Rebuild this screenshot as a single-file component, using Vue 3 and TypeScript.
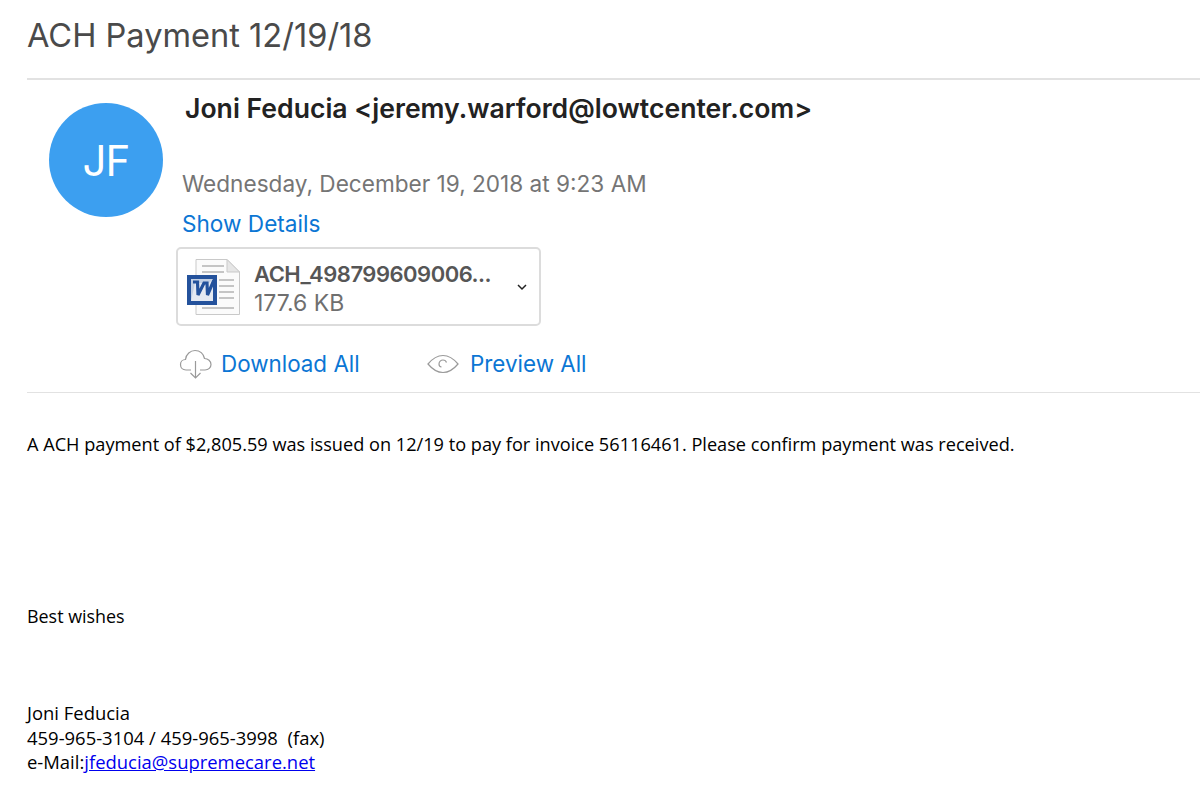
<script setup lang="ts">
const bodyLines: string[] = ['Joni Feducia', '459-965-3104 / 459-965-3998  (fax)']
</script>

<template>
  <div class="page">
    <h1 class="subject">ACH Payment 12/19/18</h1>
    <div class="rule"></div>
    <header class="head">
      <div class="avatar">JF</div>
      <div class="meta">
        <div class="from">Joni Feducia &lt;jeremy.warford@lowtcenter.com&gt;</div>
        <div class="date">Wednesday, December 19, 2018 at 9:23 AM</div>
        <a class="details">Show Details</a>
        <div class="attachment">
          <svg class="doc" width="56" height="58" viewBox="0 0 56 58">
            <path d="M10 1.5H41L53.5 14V56.5H10Z" fill="#fbfbfb" stroke="#c9c9c9" />
            <path d="M41 1.5V14H53.5Z" fill="#e6e6e6" stroke="#c9c9c9" />
            <path d="M16 8H38M16 14H38M33 22H48M33 28H48M33 34H48M33 40H48M16 50H48" stroke="#b4b4b4" stroke-width="1.5" />
            <rect x="1" y="17" width="30" height="30" fill="#24529c" />
            <rect x="5" y="21" width="22" height="22" fill="#e4e9f2" />
            <path d="M5 21H27L23 25H9L5 43Z" fill="#c3d0e4" />
            <path d="M7 24H11.5L12 37L18 25H21L21.5 37L28 22" fill="none" stroke="#24529c" stroke-width="3.2" />
          </svg>
          <div class="file">
            <div class="filename">ACH_498799609006...</div>
            <div class="filesize">177.6 KB</div>
          </div>
          <svg class="chev" width="10" height="7" viewBox="0 0 10 7">
            <path d="M1 1L5 5L9 1" fill="none" stroke="#222" stroke-width="1.5" />
          </svg>
        </div>
        <div class="actions">
          <a class="action">
            <svg width="34" height="32" viewBox="0 0 34 32" fill="none" stroke="#9a9a9a" stroke-width="1.2">
              <path d="M12 22H7C3.5 22 1.5 19.5 1.5 16.5C1.5 13.5 3.8 11.5 6.5 11.5C7 6 11.5 2.5 16 2.5C21 2.5 24.5 6 25.5 10.5C29 10.5 32 13 32 16.5C32 19.5 29.5 22 26 22H21" />
              <path d="M16.5 13V30M11.5 25L16.5 30L21.5 25" />
            </svg>
            <span>Download All</span>
          </a>
          <a class="action preview">
            <svg width="32" height="20" viewBox="0 0 32 20" fill="none" stroke="#9a9a9a" stroke-width="1.2">
              <path d="M1 10C6 4 11 1.5 16 1.5C21 1.5 26 4 31 10C26 16 21 18.5 16 18.5C11 18.5 6 16 1 10Z" />
              <path d="M19.5 8.5C19 6.8 17.5 6 16 6C13.8 6 12 7.8 12 10C12 11.5 13 12.8 14.5 13" />
            </svg>
            <span>Preview All</span>
          </a>
        </div>
      </div>
    </header>
    <div class="rule lower"></div>
    <section class="body">
      <p class="lead">A ACH payment of $2,805.59 was issued on 12/19 to pay for invoice 56116461. Please confirm payment was received.</p>
      <p class="wishes">Best wishes</p>
      <div class="sign">
        <div v-for="line in bodyLines" :key="line">{{ line }}</div>
        <div>e-Mail:<a class="mail">jfeducia@supremecare.net</a></div>
      </div>
    </section>
  </div>
</template>

<style>
html, body { margin: 0; background: #fff; }
</style>

<style scoped>
.page {
  width: 1200px;
  height: 808px;
  overflow: hidden;
  background: #fff;
  font-family: Inter, "Liberation Sans", sans-serif;
  box-sizing: border-box;
  padding-left: 27px;
}
.subject {
  margin: 0;
  padding-top: 15px;
  height: 78px;
  box-sizing: border-box;
  font-size: 32.6px;
  line-height: 40px;
  font-weight: 400;
  color: #4a4a4a;
}
.rule { height: 2px; background: #e2e2e2; }
.rule.lower { height: 1px; }
.head { display: flex; height: 312px; }
.avatar {
  width: 114px;
  height: 114px;
  margin: 23px 19px 0 22px;
  border-radius: 50%;
  background: #3c9ff0;
  color: #fff;
  font-size: 42px;
  font-weight: 400;
  letter-spacing: -1px;
  display: flex;
  align-items: center;
  justify-content: center;
  flex: none;
}
.meta { display: flex; flex-direction: column; align-items: flex-start; }
.from {
  margin: 13px 0 0 0;
  padding-left: 3px;
  font-size: 26.6px;
  line-height: 30px;
  font-weight: 600;
  color: #222;
  white-space: nowrap;
}
.date { margin-top: 47px; font-size: 22.6px; line-height: 28px; color: #757575; white-space: nowrap; }
.details { margin-top: 12px; font-size: 22.6px; line-height: 28px; color: #0b76d4; }
.attachment {
  margin: 9px 0 0 -6px;
  width: 365px;
  height: 79px;
  box-sizing: border-box;
  border: 2px solid #dcdcdc;
  border-radius: 5px;
  display: flex;
  align-items: center;
  padding-left: 8px;
}
.doc { flex: none; }
.file { margin: 4px 0 0 12px; width: 254px; }
.filename { font-size: 22px; letter-spacing: -0.5px; line-height: 28px; font-weight: 600; color: #565656; white-space: nowrap; }
.filesize { margin-top: 1px; font-size: 23px; line-height: 28px; color: #6f6f6f; }
.chev { margin: 2px 0 0 9px; }
.actions { display: flex; margin: 22px 0 0 -3px; }
.action { display: flex; align-items: center; gap: 8px; color: #0b76d4; font-size: 22.4px; line-height: 32px; width: 248px; white-space: nowrap; }
.preview { width: auto; gap: 11px; }
.body { font-family: "Open Sans", "Liberation Sans", sans-serif; font-size: 18.17px; line-height: 25px; color: #000; white-space: nowrap; }
.body p { margin: 0; }
.lead { padding-top: 39px; }
.wishes { margin-top: 147px !important; font-size: 17.9px; }
.sign { margin-top: 72px; font-size: 18.45px; line-height: 24.5px; }
.sign div { white-space: pre; }
.mail { color: #0000ee; text-decoration: underline; }
</style>
